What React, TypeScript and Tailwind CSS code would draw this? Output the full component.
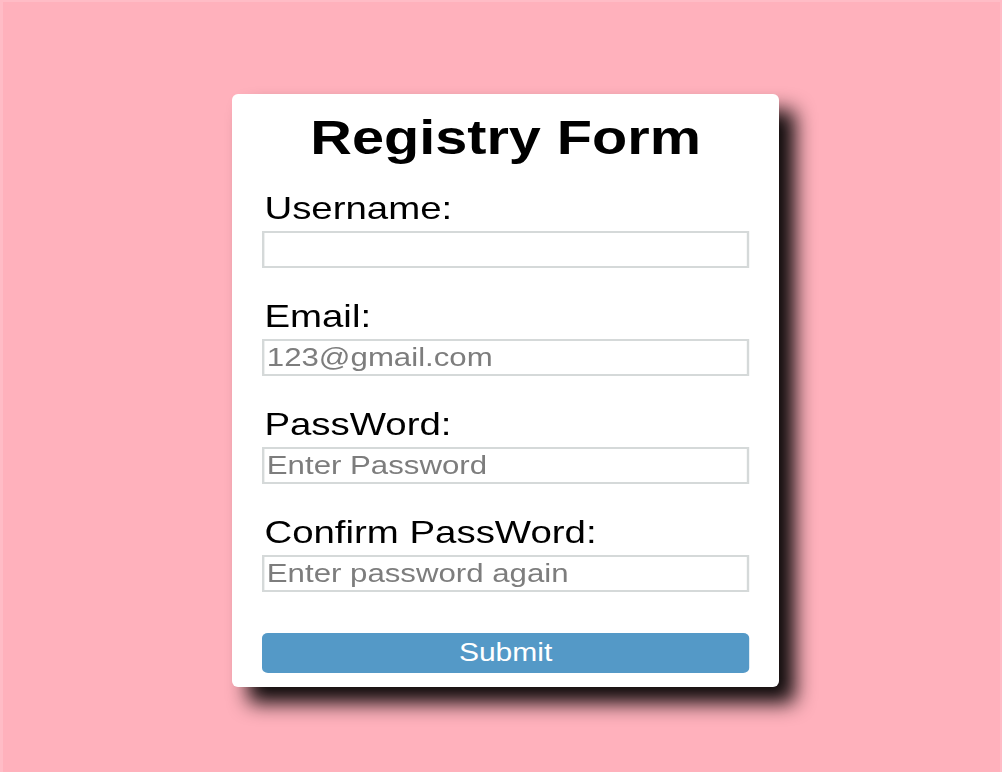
import React, { useState } from 'react';

export default function App() {

    const [formData, setFormData] = useState({
        username: "",
        email: "",
        password: "",
        confirm: "",
    });

    const handleSubmit = (e: React.FormEvent) => {
        e.preventDefault();
        if (formData.password !== formData.confirm) {
            alert("Passwords do not match");
            return;
        }
        console.log("Registered:", formData);
    };

    const inputClass =
        "w-full h-[37px] border-2 border-[#d5d9d9] bg-white px-[2px] text-[26px] text-black outline-none placeholder:text-[#7d7d7d]";

    return (
        <div className="min-h-screen bg-[#ffb1bc] pt-[92px] pl-[229px] font-['Liberation_Sans',Arial,sans-serif] border-l-[3px] border-t-2 border-r-2 border-[#ffbcc6]">
            <div className="w-[547px] bg-white rounded-[6px] shadow-[16px_16px_20px_rgba(0,0,0,0.95)] pt-[20px] pb-[14px]">
                <form onSubmit={handleSubmit} className="w-[456px] origin-left scale-x-[1.2] px-[25px] flex flex-col">
                    <h1 className="text-[48px] leading-[48px] font-bold text-black text-center">Registry Form</h1>

                    <div className="mt-[29px] flex flex-col gap-[31px]">
                        <div className="flex flex-col gap-[5px]">
                            <label className="pl-[2px] text-[32px] leading-[35px] text-black">Username:</label>
                            <input
                                type="text"
                                value={formData.username}
                                onChange={(e) => setFormData({ ...formData, username: e.target.value })}
                                className={inputClass}
                            />
                        </div>
                        <div className="flex flex-col gap-[5px]">
                            <label className="pl-[2px] text-[32px] leading-[35px] text-black">Email:</label>
                            <input
                                type="email"
                                placeholder="123@gmail.com"
                                value={formData.email}
                                onChange={(e) => setFormData({ ...formData, email: e.target.value })}
                                className={inputClass}
                            />
                        </div>
                        <div className="flex flex-col gap-[5px]">
                            <label className="pl-[2px] text-[32px] leading-[35px] text-black">PassWord:</label>
                            <input
                                type="password"
                                placeholder="Enter Password"
                                value={formData.password}
                                onChange={(e) => setFormData({ ...formData, password: e.target.value })}
                                className={inputClass}
                            />
                        </div>
                        <div className="flex flex-col gap-[5px]">
                            <label className="pl-[2px] text-[32px] leading-[35px] text-black">Confirm PassWord:</label>
                            <input
                                type="password"
                                placeholder="Enter password again"
                                value={formData.confirm}
                                onChange={(e) => setFormData({ ...formData, confirm: e.target.value })}
                                className={inputClass}
                            />
                        </div>
                    </div>

                    <button
                        type="submit"
                        className="mt-[41px] h-[40px] w-full rounded-[5px] bg-[#5499c7] text-white text-[25px]"
                    >
                        Submit
                    </button>
                </form>
            </div>
        </div>
    );
}
